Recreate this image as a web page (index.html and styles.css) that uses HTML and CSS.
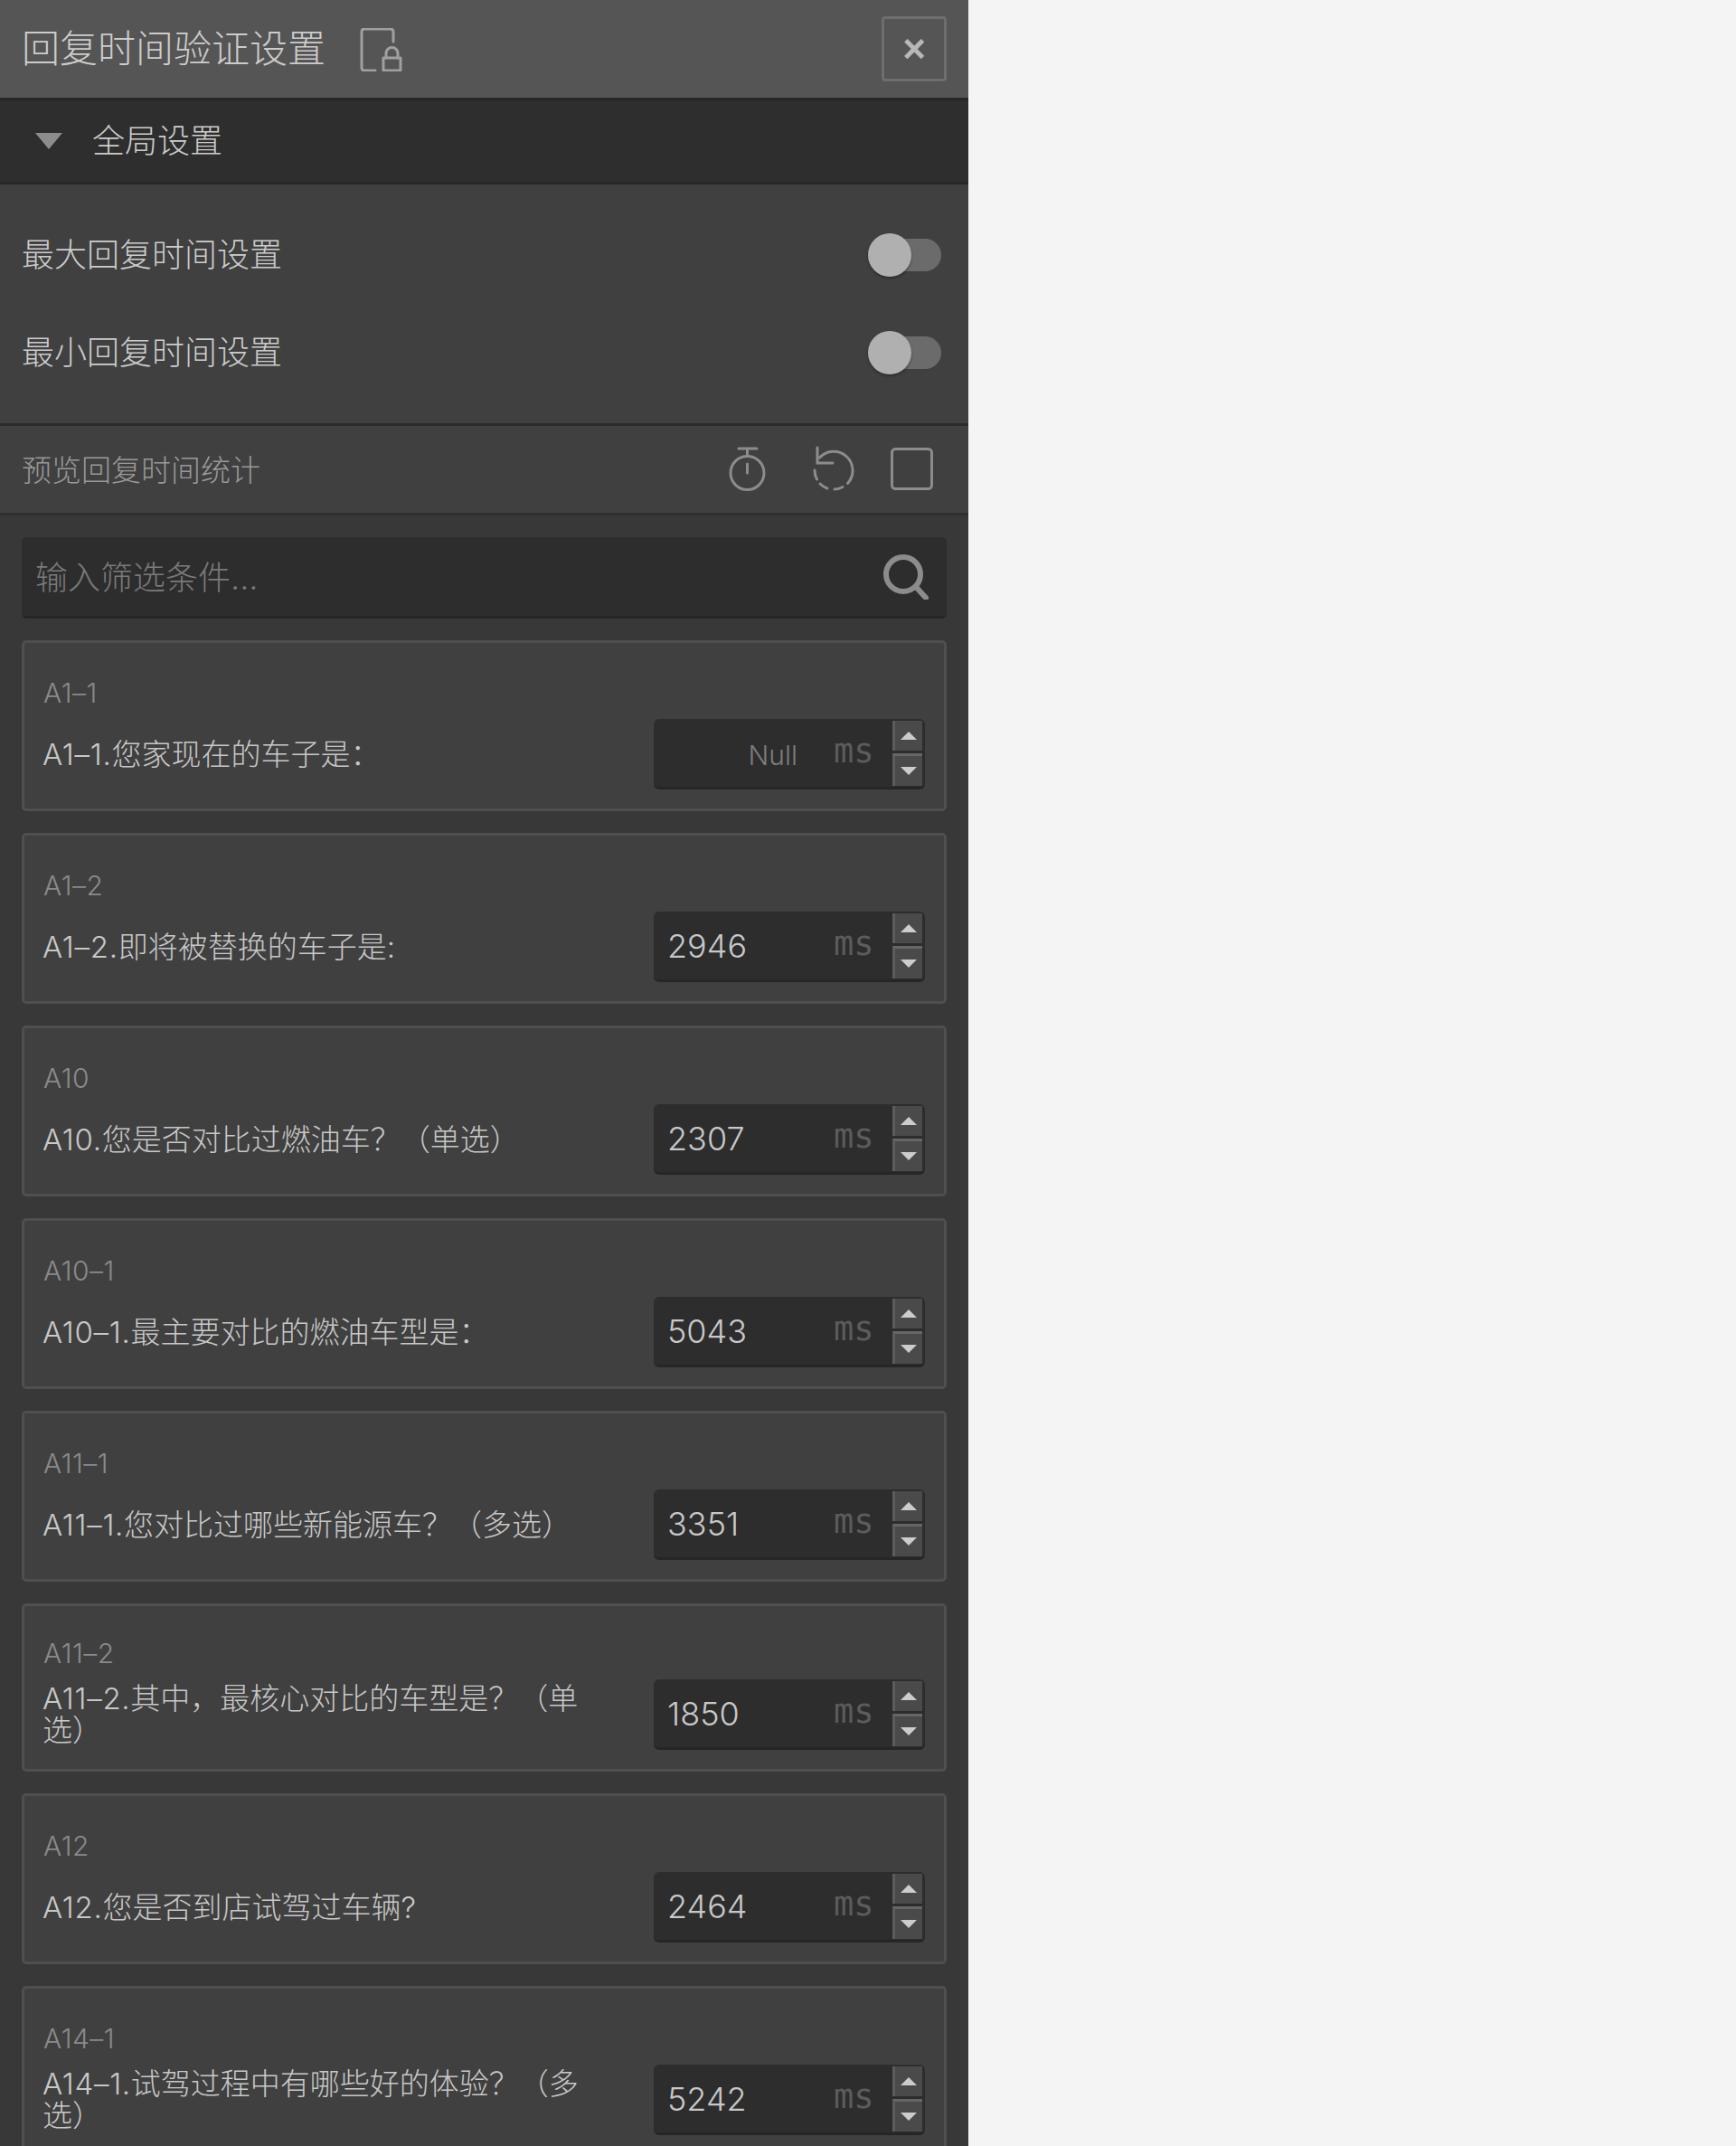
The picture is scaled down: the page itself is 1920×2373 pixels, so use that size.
FILE: index.html
```html
<!DOCTYPE html>
<html lang="zh-CN">
<head>
  <meta charset="UTF-8">
  <title>回复时间验证设置</title>
  <link rel="stylesheet" href="styles.css">
</head>
<body>
  <div class="panel">

    <!-- Header -->
    <header class="panel-head">
      <h1>回复时间验证设置</h1>
      <svg class="lock-icon" width="48" height="48" viewBox="0 0 48 48" fill="none" stroke="#a0a0a0" stroke-width="3" stroke-linecap="round" stroke-linejoin="round">
        <path d="M17 47H5a3 3 0 0 1-3-3V4a3 3 0 0 1 3-3h29a3 3 0 0 1 3 3v11"/>
        <rect x="26" y="33" width="19" height="14"/>
        <path d="M29 33v-5a6.500 6.500 0 0 1 13 0v5"/>
      </svg>
      <button class="close-btn">&#215;</button>
    </header>

    <!-- Global settings -->
    <div class="section-bar">
      <span class="caret"></span>
      <span>全局设置</span>
    </div>
    <div class="settings">
      <div class="setting-row">
        <span>最大回复时间设置</span>
        <span class="toggle"></span>
      </div>
      <div class="setting-row">
        <span>最小回复时间设置</span>
        <span class="toggle"></span>
      </div>
    </div>

    <!-- Preview toolbar -->
    <div class="preview-bar">
      <span class="preview-title">预览回复时间统计</span>
      <svg class="tool-icon" width="240" height="54" viewBox="0 0 240 54" fill="none" stroke="#8c8c8c" stroke-width="3" stroke-linecap="round">
        <path d="M17 4h20M26.500 4v8"/>
        <circle cx="26.500" cy="31" r="18.500"/>
        <path d="M26.500 21v10"/>
        <path d="M104 3v17h17"/>
        <path d="M106.500 14A21 21 0 1 1 137.500 42.500"/>
        <path d="M132 46.500A21 21 0 0 1 123 49M115 48A21 21 0 0 1 107 43M103.500 38A21 21 0 0 1 101 28"/>
        <rect x="186.500" y="4.500" width="44" height="44" rx="4"/>
      </svg>
    </div>

    <div class="list-area">
      <!-- Search -->
      <div class="search-box">
        <span>输入筛选条件...</span>
        <svg width="50" height="50" viewBox="0 0 50 50" fill="none" stroke="#8c8c8c" stroke-width="6" stroke-linecap="round">
          <circle cx="22" cy="22" r="19"/>
          <path d="M36 36l11 12"/>
        </svg>
      </div>

      <!-- Questions -->
      <div class="card">
        <div class="card-code">A1–1</div>
        <div class="card-row">
          <div class="card-text"><span class="q-no">A1–1.</span>您家现在的车子是&#xFF1A;</div>
          <div class="num-input">
            <span class="num-value is-null">Null</span>
            <span class="unit">ms</span>
            <div class="spin"><span class="spin-up"></span><span class="spin-down"></span></div>
          </div>
        </div>
      </div>

      <div class="card">
        <div class="card-code">A1–2</div>
        <div class="card-row">
          <div class="card-text"><span class="q-no">A1–2.</span>即将被替换的车子是:</div>
          <div class="num-input">
            <span class="num-value">2946</span>
            <span class="unit">ms</span>
            <div class="spin"><span class="spin-up"></span><span class="spin-down"></span></div>
          </div>
        </div>
      </div>

      <div class="card">
        <div class="card-code">A10</div>
        <div class="card-row">
          <div class="card-text"><span class="q-no">A10.</span>您是否对比过燃油车&#xFF1F;&#xFF08;单选&#xFF09;</div>
          <div class="num-input">
            <span class="num-value">2307</span>
            <span class="unit">ms</span>
            <div class="spin"><span class="spin-up"></span><span class="spin-down"></span></div>
          </div>
        </div>
      </div>

      <div class="card">
        <div class="card-code">A10–1</div>
        <div class="card-row">
          <div class="card-text"><span class="q-no">A10–1.</span>最主要对比的燃油车型是&#xFF1A;</div>
          <div class="num-input">
            <span class="num-value">5043</span>
            <span class="unit">ms</span>
            <div class="spin"><span class="spin-up"></span><span class="spin-down"></span></div>
          </div>
        </div>
      </div>

      <div class="card">
        <div class="card-code">A11–1</div>
        <div class="card-row">
          <div class="card-text"><span class="q-no">A11–1.</span>您对比过哪些新能源车&#xFF1F;&#xFF08;多选&#xFF09;</div>
          <div class="num-input">
            <span class="num-value">3351</span>
            <span class="unit">ms</span>
            <div class="spin"><span class="spin-up"></span><span class="spin-down"></span></div>
          </div>
        </div>
      </div>

      <div class="card card-short">
        <div class="card-code">A11–2</div>
        <div class="card-row">
          <div class="card-text"><span class="q-no">A11–2.</span>其中&#xFF0C;最核心对比的车型是&#xFF1F;&#xFF08;单选&#xFF09;</div>
          <div class="num-input">
            <span class="num-value">1850</span>
            <span class="unit">ms</span>
            <div class="spin"><span class="spin-up"></span><span class="spin-down"></span></div>
          </div>
        </div>
      </div>

      <div class="card">
        <div class="card-code">A12</div>
        <div class="card-row">
          <div class="card-text"><span class="q-no">A12.</span>您是否到店试驾过车辆?</div>
          <div class="num-input">
            <span class="num-value">2464</span>
            <span class="unit">ms</span>
            <div class="spin"><span class="spin-up"></span><span class="spin-down"></span></div>
          </div>
        </div>
      </div>

      <div class="card">
        <div class="card-code">A14–1</div>
        <div class="card-row">
          <div class="card-text"><span class="q-no">A14–1.</span>试驾过程中有哪些好的体验&#xFF1F;&#xFF08;多选&#xFF09;</div>
          <div class="num-input">
            <span class="num-value">5242</span>
            <span class="unit">ms</span>
            <div class="spin"><span class="spin-up"></span><span class="spin-down"></span></div>
          </div>
        </div>
      </div>
    </div>
  </div>
</body>
</html>
```

FILE: styles.css
```css
html, body {
  margin: 0;
  padding: 0;
  height: 100%;
  overflow: hidden;
}

body {
  font-family: Inter, "Noto Sans CJK SC", sans-serif;
  font-weight: 300;
  background-color: #f4f4f4;
}

.panel {
  width: 1071px;
  height: 2373px;
  overflow: hidden;
  background-color: #404040;
  color: #cccccc;
}

/* Header */
.panel-head {
  height: 108px;
  box-sizing: border-box;
  padding: 0 24px;
  display: flex;
  align-items: center;
  background-color: #555555;
}

.panel-head h1 {
  margin: 0;
  font-size: 42px;
  font-weight: 300;
  line-height: 1;
}

.lock-icon {
  margin-left: 38px;
  margin-top: 1px;
}

.close-btn {
  margin-left: auto;
  width: 72px;
  height: 72px;
  border: 3px solid #6e6e6e;
  border-radius: 4px;
  background: none;
  color: #b8b8b8;
  font-family: "Liberation Sans", sans-serif;
  font-size: 44px;
  font-weight: bold;
  line-height: 1;
  padding: 0;
}

/* Section bar */
.section-bar {
  height: 96px;
  box-sizing: border-box;
  display: flex;
  align-items: center;
  padding-left: 39px;
  font-size: 36px;
  background-color: #2e2e2e;
  border-top: 3px solid #272727;
  border-bottom: 3px solid #272727;
}

.section-bar span:last-child {
  margin-top: -6px;
}

.caret {
  width: 0;
  height: 0;
  margin-right: 33px;
  border-left: 15px solid transparent;
  border-right: 15px solid transparent;
  border-top: 18px solid #8c8c8c;
}

.settings {
  height: 264px;
  box-sizing: border-box;
  padding: 24px 0 0;
}

.setting-row {
  height: 108px;
  padding: 0 30px 0 24px;
  display: flex;
  align-items: center;
  justify-content: space-between;
  font-size: 36px;
}

.setting-row span:first-child {
  margin-top: -6px;
}

.toggle {
  position: relative;
  display: block;
  width: 81px;
  height: 36px;
  border-radius: 18px;
  background-color: #6b6b6b;
}

.toggle::before {
  content: "";
  position: absolute;
  left: 0;
  top: -6px;
  width: 48px;
  height: 48px;
  border-radius: 50%;
  background-color: #b0b0b0;
  box-shadow: 0 2px 3px rgba(0, 0, 0, 0.3);
}

/* Preview toolbar */
.preview-bar {
  height: 102px;
  box-sizing: border-box;
  display: flex;
  align-items: center;
  justify-content: space-between;
  padding: 0 24px;
  border-top: 3px solid #2b2b2b;
  border-bottom: 3px solid #2f2f2f;
}

.preview-title {
  margin-top: -3px;
  font-size: 33px;
  color: #999999;
}

.tool-icon {
  margin-right: 7px;
}

/* List */
.list-area {
  padding: 24px 24px 0;
  background-color: #383838;
  height: 1803px;
  box-sizing: border-box;
}

.search-box {
  height: 90px;
  box-sizing: border-box;
  margin-bottom: 24px;
  padding: 0 20px 0 15px;
  display: flex;
  align-items: center;
  justify-content: space-between;
  font-size: 36px;
  color: #7a7a7a;
  background-color: #2d2d2d;
  border-radius: 5px;
  border-bottom: 3px solid #262626;
}

.search-box span {
  margin-top: -3px;
}

.card {
  height: 189px;
  box-sizing: border-box;
  margin-bottom: 24px;
  padding: 33px 21px 0;
  background-color: #404040;
  border: 3px solid #4f4f4f;
  border-radius: 5px;
}

.card-short {
  height: 186px;
  padding-top: 30px;
}

.card-code {
  height: 51px;
  line-height: 44px;
  font-size: 30px;
  letter-spacing: 0.5px;
  color: #8a8a8a;
}

.card-row {
  display: flex;
  align-items: center;
  justify-content: space-between;
  height: 78px;
}

.card-text {
  width: 610px;
  margin-left: -1px;
  font-size: 33px;
  line-height: 35px;
  color: #c8c8c8;
}

.q-no {
  letter-spacing: 0.7px;
}

/* Number input */
.num-input {
  width: 300px;
  height: 78px;
  box-sizing: border-box;
  flex-shrink: 0;
  display: flex;
  align-items: center;
  padding: 3px;
  background-color: #2d2d2d;
  border-radius: 6px;
  border-bottom: 3px solid #262626;
}

.num-value {
  width: 158px;
  padding-left: 12px;
  font-size: 36px;
  color: #c8c8c8;
}

.num-value.is-null {
  width: 156px;
  margin-top: 4px;
  padding-left: 0;
  padding-right: 14px;
  text-align: right;
  font-size: 30px;
  color: #7c7c7c;
}

.unit {
  margin-left: 26px;
  margin-top: -4px;
  font-family: "DejaVu Sans Mono", monospace;
  font-size: 37px;
  color: #5c5c5c;
}

.spin {
  margin-left: auto;
  width: 33px;
  height: 72px;
  display: flex;
  flex-direction: column;
  justify-content: space-between;
}

.spin-up,
.spin-down {
  position: relative;
  display: block;
  box-sizing: border-box;
  background-color: #4a4a4a;
  border-left: 3px solid #5c5c5c;
}

.spin-up {
  height: 33px;
}

.spin-down {
  height: 36px;
  border-top: 3px solid #666666;
}

.spin-up::after,
.spin-down::after {
  content: "";
  position: absolute;
  left: 6px;
  border-left: 9px solid transparent;
  border-right: 9px solid transparent;
}

.spin-up::after {
  top: 12px;
  border-bottom: 9px solid #cccccc;
}

.spin-down::after {
  top: 12px;
  border-top: 9px solid #cccccc;
}
```
